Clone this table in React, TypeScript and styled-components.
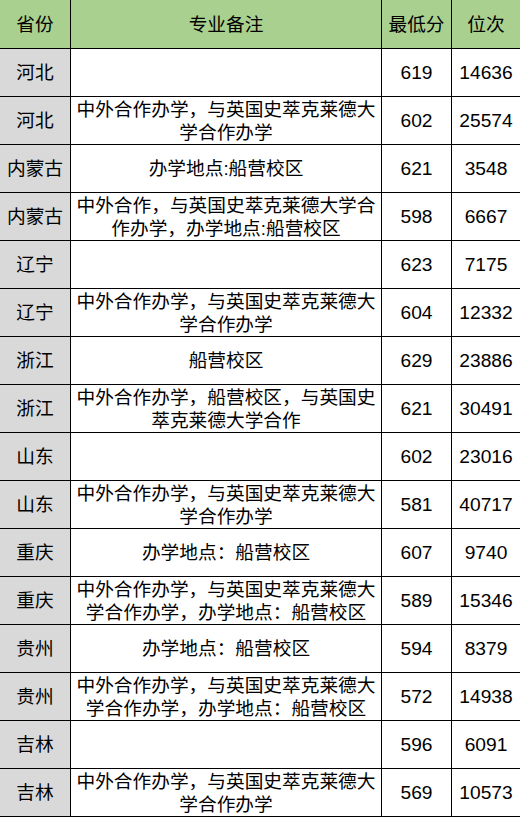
import React from "react";
import styled, { createGlobalStyle } from "styled-components";

const GlobalStyle = createGlobalStyle`
  html, body {
    margin: 0;
    padding: 0;
    background: #ffffff;
  }
  body {
    width: 520px;
    height: 817px;
    overflow: hidden;
    font-family: "Liberation Sans", "Noto Sans CJK SC", sans-serif;
  }
`;

const Table = styled.div`
  display: grid;
  grid-template-columns: 70px 310px 69px 68px;
  grid-template-rows: 48px repeat(16, 47px);
  column-gap: 1px;
  row-gap: 1px;
  width: 520px;
  padding-bottom: 1px;
  background: #000000;
  font-family: "Liberation Sans", "Noto Sans CJK SC", sans-serif;
  font-size: 18.7px;
  color: #000000;
`;

const Cell = styled.div<{ $tone?: "head" | "side" | "body" }>`
  display: flex;
  align-items: center;
  justify-content: center;
  text-align: center;
  line-height: 23px;
  background: ${(p) =>
    p.$tone === "head" ? "#a9d08e" : p.$tone === "side" ? "#d9d9d9" : "#ffffff"};
  white-space: nowrap;
  overflow: hidden;
`;

const NumText = styled.span`
  font-size: 19.2px;
`;

type Row = {
  province: string;
  note: string[];
  score: string;
  rank: string;
};

const rows: Row[] = [
  { province: "河北", note: [], score: "619", rank: "14636" },
  { province: "河北", note: ["中外合作办学，与英国史萃克莱德大", "学合作办学"], score: "602", rank: "25574" },
  { province: "内蒙古", note: ["办学地点:船营校区"], score: "621", rank: "3548" },
  { province: "内蒙古", note: ["中外合作，与英国史萃克莱德大学合", "作办学，办学地点:船营校区"], score: "598", rank: "6667" },
  { province: "辽宁", note: [], score: "623", rank: "7175" },
  { province: "辽宁", note: ["中外合作办学，与英国史萃克莱德大", "学合作办学"], score: "604", rank: "12332" },
  { province: "浙江", note: ["船营校区"], score: "629", rank: "23886" },
  { province: "浙江", note: ["中外合作办学，船营校区，与英国史", "萃克莱德大学合作"], score: "621", rank: "30491" },
  { province: "山东", note: [], score: "602", rank: "23016" },
  { province: "山东", note: ["中外合作办学，与英国史萃克莱德大", "学合作办学"], score: "581", rank: "40717" },
  { province: "重庆", note: ["办学地点：船营校区"], score: "607", rank: "9740" },
  { province: "重庆", note: ["中外合作办学，与英国史萃克莱德大", "学合作办学，办学地点：船营校区"], score: "589", rank: "15346" },
  { province: "贵州", note: ["办学地点：船营校区"], score: "594", rank: "8379" },
  { province: "贵州", note: ["中外合作办学，与英国史萃克莱德大", "学合作办学，办学地点：船营校区"], score: "572", rank: "14938" },
  { province: "吉林", note: [], score: "596", rank: "6091" },
  { province: "吉林", note: ["中外合作办学，与英国史萃克莱德大", "学合作办学"], score: "569", rank: "10573" },
];

export default function App() {
  return (
    <>
      <GlobalStyle />
      <Table>
        <Cell $tone="head">省份</Cell>
        <Cell $tone="head">专业备注</Cell>
        <Cell $tone="head">最低分</Cell>
        <Cell $tone="head">位次</Cell>
        {rows.map((r, i) => (
          <React.Fragment key={i}>
            <Cell $tone="side">{r.province}</Cell>
            <Cell $tone="body">
              <div>
                {r.note.map((line, j) => (
                  <div key={j}>{line}</div>
                ))}
              </div>
            </Cell>
            <Cell $tone="body">
              <NumText>{r.score}</NumText>
            </Cell>
            <Cell $tone="body">
              <NumText>{r.rank}</NumText>
            </Cell>
          </React.Fragment>
        ))}
      </Table>
    </>
  );
}
